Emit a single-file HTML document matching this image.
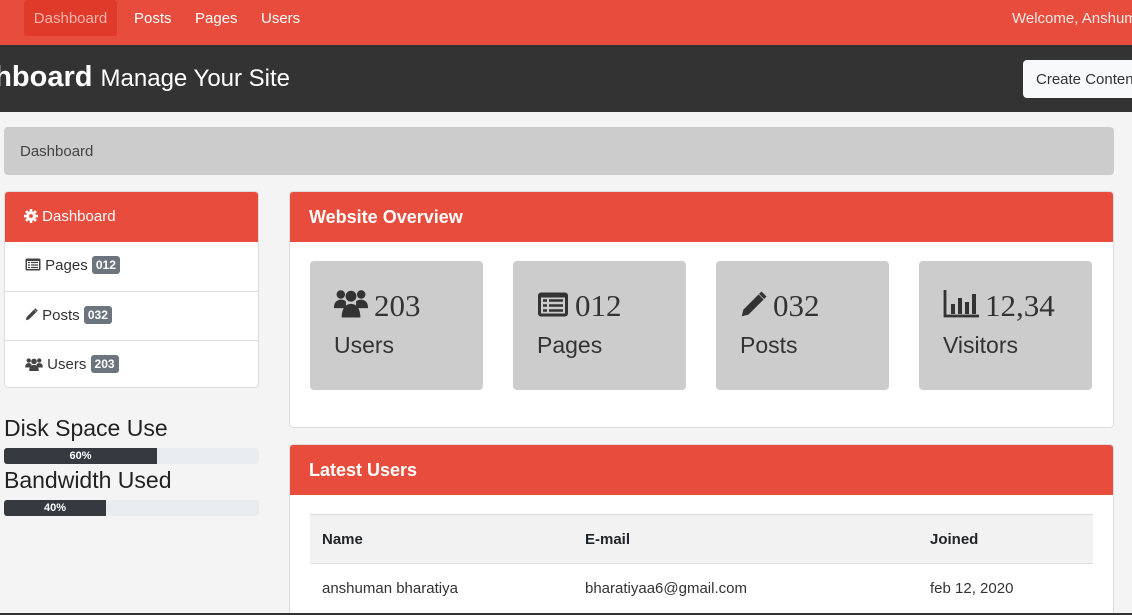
<!DOCTYPE html>
<html style="overflow:hidden;width:1132px;height:615px"><head><meta charset="utf-8"><style>
*{box-sizing:border-box;margin:0;padding:0}
body{width:1132px;height:615px;overflow:hidden;background:#f4f4f4;font-family:"Liberation Sans",sans-serif;color:#212529;position:relative}
.nav{position:absolute;left:0;top:0;width:1132px;height:45px;background:#e74c3c}
.nav a{position:absolute;top:0;height:36px;line-height:37px;color:#fff;font-size:15px;white-space:nowrap}
.hdr{position:absolute;left:0;top:45px;width:1132px;height:67px;background:#333}
.abs{position:absolute}
.card{position:absolute;background:#fff;border:1px solid #ddd;border-radius:4px;overflow:hidden}
.ph{background:#e74c3c;color:#fff;font-weight:bold;font-size:18px;height:50px;line-height:50px;padding-left:19px}
.li{height:49px;border-top:1px solid #ddd;line-height:48px;padding-left:20px;font-size:15px;color:#333}
.badge{display:inline-block;background:#6c757d;color:#fff;font-size:12px;font-weight:bold;padding:0 4px;height:18px;line-height:18px;border-radius:3px;vertical-align:1px}
.box{position:absolute;top:261px;width:173px;height:129px;background:#ccc;border-radius:4px}
.box .n{position:absolute;left:24px;top:27px;font-family:"Liberation Serif",serif;font-size:31px;color:#333;white-space:nowrap}
.box .n svg{vertical-align:-2px;margin-right:6px}
.box .l{position:absolute;left:24px;top:71px;font-size:23px;color:#333}
.prog{position:absolute;left:4px;width:255px;height:16px;background:#e9ecef;border-radius:3px;overflow:hidden}
.prog div{height:16px;background:#343a40;color:#fff;font-size:11px;font-weight:bold;text-align:center;line-height:16px}
th,td{text-align:left;font-size:15px;padding-left:12px}
</style></head><body>
<div class="nav">
<a style="left:-8px">o</a>
<a style="left:24px;width:93px;background:#e03a2b;border-radius:3px;color:#f7b5ae;text-align:center">Dashboard</a>
<a style="left:134px">Posts</a>
<a style="left:195px">Pages</a>
<a style="left:261px">Users</a>
<a style="left:1012px;color:#f8e8e6">Welcome, Anshuman</a>
</div>
<div class="hdr">
<div class="abs" style="left:-59px;top:16px;color:#fff;font-size:29px;white-space:nowrap"><b>Dashboard</b> <span style="font-size:24px">Manage Your Site</span></div>
<div class="abs" style="left:1023px;top:15px;width:130px;height:38px;background:#f8f9fa;border-radius:4px;color:#333;font-size:15px;line-height:40px;padding-left:13px;white-space:nowrap">Create Content</div>
</div>
<div class="abs" style="left:4px;top:127px;width:1110px;height:48px;background:#ccc;border-radius:4px;line-height:50px;padding-left:16px;font-size:15px;color:#444">Dashboard</div>

<div class="card" style="left:4px;top:191px;width:255px;height:197px">
<div style="background:#e74c3c;height:50px;line-height:50px;padding-left:19px;color:#fff;font-size:15px"><svg width="14" height="14" viewBox="0 0 16 16" style="vertical-align:-2px"><circle cx="8" cy="8" r="5.5" fill="#fff"/><g stroke="#fff" stroke-width="3"><path d="M8 0v16M0 8h16M2.3 2.3l11.4 11.4M13.7 2.3L2.3 13.7"/></g><circle cx="8" cy="8" r="2.2" fill="#e74c3c"/></svg> Dashboard</div>
<div class="li" style="border-top:0"><svg width="16" height="13" viewBox="0 0 16 13" style="vertical-align:-1px"><rect x="0.5" y="0.5" width="15" height="12" rx="1.5" fill="#444"/><rect x="2" y="3" width="12" height="8" fill="#fff"/><path d="M3 4.5h2M6 4.5h7M3 7h2M6 7h7M3 9.5h2M6 9.5h7" stroke="#444" stroke-width="1.2"/></svg> Pages <span class="badge">012</span></div>
<div class="li"><svg width="13" height="13" viewBox="0 0 16 16" style="vertical-align:-1px"><path d="M1 15l1-4L11 2l3 3-9 9z" fill="#444"/><path d="M12 1l3 3" stroke="#444" stroke-width="2"/></svg> Posts <span class="badge">032</span></div>
<div class="li"><svg width="18" height="14" viewBox="0 0 20 16" style="vertical-align:-2px"><g fill="#444"><circle cx="4" cy="4" r="2.5"/><circle cx="16" cy="4" r="2.5"/><circle cx="10" cy="5" r="3.2"/><path d="M0 11c0-3 2-4 4-4s3 1 3 1v4H0zM20 11c0-3-2-4-4-4s-3 1-3 1v4h7z"/><path d="M4.5 16c0-5 2.5-7 5.5-7s5.5 2 5.5 7z"/></g></svg> Users <span class="badge">203</span></div>
</div>

<div class="abs" style="left:4px;top:415px;font-size:23px;color:#222">Disk Space Use</div>
<div class="prog" style="top:448px"><div style="width:153px">60%</div></div>
<div class="abs" style="left:4px;top:467px;font-size:23px;color:#222">Bandwidth Used</div>
<div class="prog" style="top:500px"><div style="width:102px">40%</div></div>

<div class="card" style="left:289px;top:191px;width:825px;height:237px"><div class="ph">Website Overview</div></div>
<div class="box" style="left:310px"><div class="n"><svg width="34" height="30" viewBox="0 0 20 17"><g fill="#333"><circle cx="4" cy="3.5" r="2.5"/><circle cx="16" cy="3.5" r="2.5"/><circle cx="10" cy="4.5" r="3.2"/><path d="M0 11c0-3 2-4.5 4-4.5s3 1 3 1v4H0zM20 11c0-3-2-4.5-4-4.5s-3 1-3 1v4h7z"/><path d="M4.5 17c0-5.5 2.5-8 5.5-8s5.5 2.5 5.5 8z"/></g></svg>203</div><div class="l">Users</div></div>
<div class="box" style="left:513px"><div class="n"><svg width="32" height="27" viewBox="0 0 16 13"><rect x="0.5" y="0.5" width="15" height="12" rx="1.5" fill="#333"/><rect x="2" y="3" width="12" height="8" fill="#ccc"/><path d="M3 4.5h2M6 4.5h7M3 7h2M6 7h7M3 9.5h2M6 9.5h7" stroke="#333" stroke-width="1.2"/></svg>012</div><div class="l">Pages</div></div>
<div class="box" style="left:716px"><div class="n"><svg width="27" height="27" viewBox="0 0 16 16"><path d="M1 15l1-4L11 2l3 3-9 9z" fill="#333"/><path d="M12 1l3 3" stroke="#333" stroke-width="2"/></svg>032</div><div class="l">Posts</div></div>
<div class="box" style="left:919px"><div class="n"><svg width="36" height="28" viewBox="0 0 18 14"><path d="M1 0v13h17" stroke="#333" stroke-width="1.4" fill="none"/><g fill="#333"><rect x="4" y="7" width="2" height="5"/><rect x="7.5" y="4" width="2" height="8"/><rect x="11" y="6" width="2" height="6"/><rect x="14.5" y="2" width="2" height="10"/></g></svg>12,34</div><div class="l">Visitors</div></div>

<div class="card" style="left:289px;top:444px;width:825px;height:169px;border-bottom:0;border-radius:4px 4px 0 0"><div class="ph">Latest Users</div>
<table style="position:absolute;left:20px;top:69px;width:783px;border-collapse:collapse">
<tr style="background:#f2f2f2;height:49px;border-top:1px solid #ddd;border-bottom:1px solid #ddd"><th style="width:263px">Name</th><th style="width:345px">E-mail</th><th>Joined</th></tr>
<tr style="height:49px;color:#333"><td>anshuman bharatiya</td><td>bharatiyaa6@gmail.com</td><td>feb 12, 2020</td></tr>
</table></div>
<div class="abs" style="left:0;top:613px;width:1132px;height:2px;background:#333"></div>
</body></html>
